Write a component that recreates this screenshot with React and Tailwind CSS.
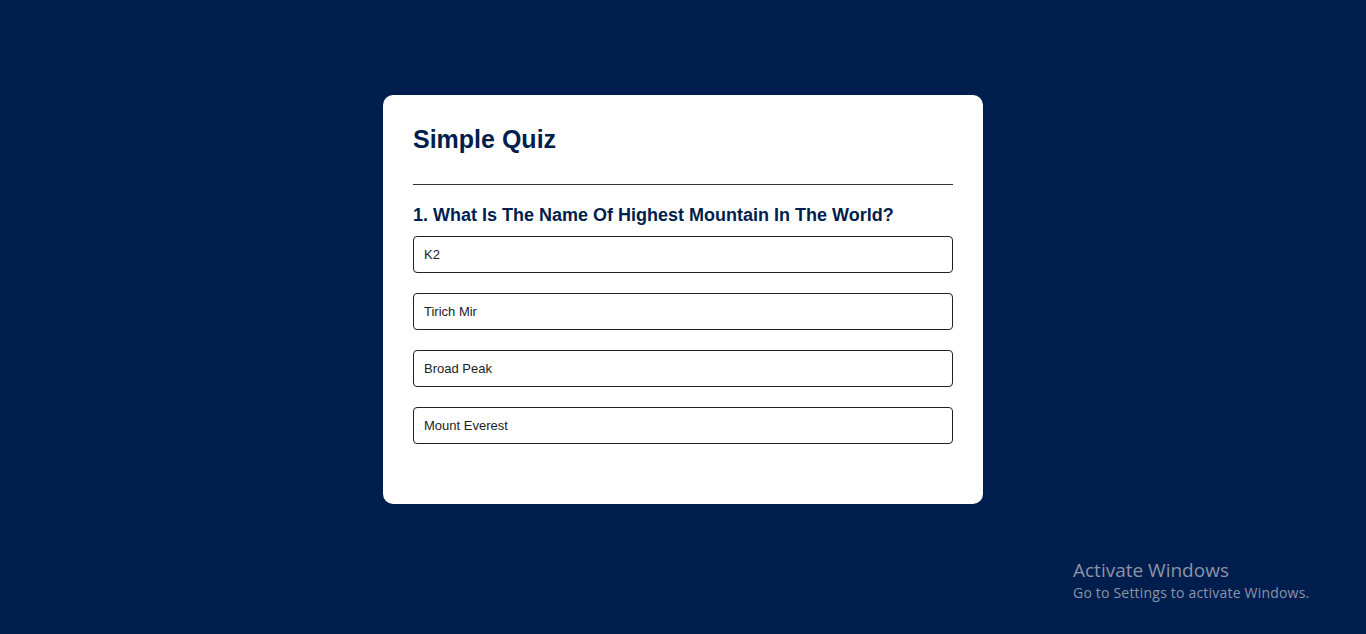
import React from 'react';

const options = ['K2', 'Tirich Mir', 'Broad Peak', 'Mount Everest'];

const App = () => {
  return (
    <div className="relative min-h-screen h-[634px] overflow-hidden bg-[#001e4d] pt-[95px] font-['Liberation_Sans',Arial,sans-serif]">
      <div className="w-[600px] mx-auto bg-white rounded-[10px] p-[30px]">
        <h1 className="text-[25px] leading-[29px] font-bold text-[#001e4d] pb-[30px] border-b border-[#333]">
          Simple Quiz
        </h1>
        <div className="py-5">
          <h2 className="text-[18px] leading-[21px] font-bold text-[#001e4d]">
            1. What Is The Name Of Highest Mountain In The World?
          </h2>
          <div className="flex flex-col gap-5 my-2.5">
            {options.map((opt) => (
              <button
                key={opt}
                className="w-full text-left bg-white text-[#222] text-[13px] leading-[15px] py-[10px] px-[10px] border border-[#222] rounded-[4px]"
              >
                {opt}
              </button>
            ))}
          </div>
        </div>
      </div>

      {/* windows watermark */}
      <div className="absolute left-[1073px] top-[558px] text-[#8b94a8] font-['Open_Sans','Noto_Sans',sans-serif] pointer-events-none">
        <p className="text-[19px] leading-[24px]">Activate Windows</p>
        <p className="text-[14px] leading-[21px] tracking-[0.2px]">Go to Settings to activate Windows.</p>
      </div>
    </div>
  );
};

export default App;
